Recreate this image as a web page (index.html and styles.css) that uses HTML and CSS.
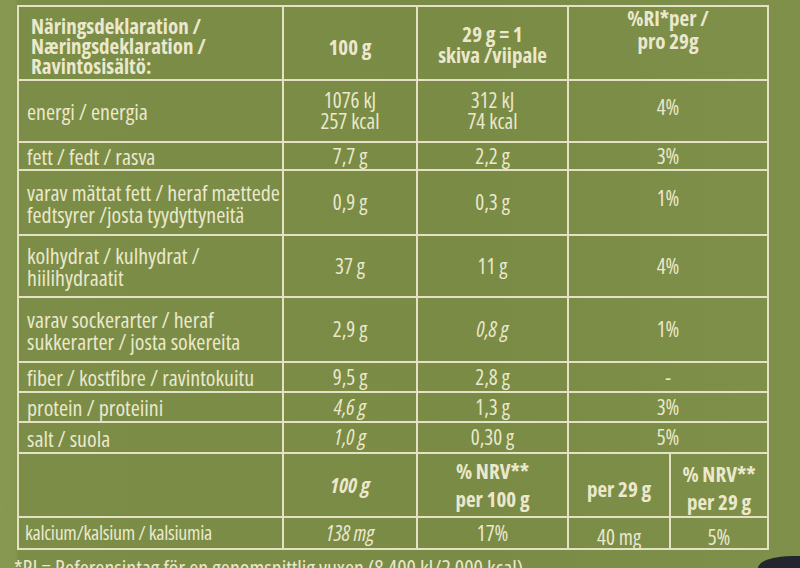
FILE: index.html
```html
<!DOCTYPE html>
<html lang="sv">
<head>
<meta charset="utf-8">
<title>Näringsdeklaration</title>
<link rel="stylesheet" href="styles.css">
</head>
<body>
<div class="sheet">
  <table class="nutri">
    <colgroup>
      <col class="c-name"><col class="c-100"><col class="c-29"><col class="c-a"><col class="c-b">
    </colgroup>
    <tr class="r-head">
      <th class="name head">Näringsdeklaration /<br>Næringsdeklaration /<br>Ravintosisältö:</th>
      <th class="low">100 g</th>
      <th class="pair">29 g = 1<br>skiva /viipale</th>
      <th class="ri" colspan="2">%RI*per /<br>pro 29g</th>
    </tr>
    <tr class="r-energy">
      <td class="name">energi / energia</td>
      <td class="num">1076 kJ<br>257 kcal</td>
      <td class="num">312 kJ<br>74 kcal</td>
      <td colspan="2" class="num up">4%</td>
    </tr>
    <tr class="r-one">
      <td class="name">fett / fedt / rasva</td>
      <td class="num">7,7 g</td>
      <td class="num">2,2 g</td>
      <td colspan="2" class="num">3%</td>
    </tr>
    <tr class="r-two">
      <td class="name">varav mättat fett / heraf mættede<br>fedtsyrer /josta tyydyttyneitä</td>
      <td class="num">0,9 g</td>
      <td class="num">0,3 g</td>
      <td colspan="2" class="num up">1%</td>
    </tr>
    <tr class="r-carb">
      <td class="name">kolhydrat / kulhydrat /<br>hiilihydraatit</td>
      <td class="num">37 g</td>
      <td class="num">11 g</td>
      <td colspan="2" class="num">4%</td>
    </tr>
    <tr class="r-two">
      <td class="name">varav sockerarter / heraf<br>sukkerarter / josta sokereita</td>
      <td class="num">2,9 g</td>
      <td class="num it">0,8 g</td>
      <td colspan="2" class="num">1%</td>
    </tr>
    <tr class="r-one r-fib">
      <td class="name">fiber / kostfibre / ravintokuitu</td>
      <td class="num">9,5 g</td>
      <td class="num">2,8 g</td>
      <td colspan="2" class="num">-</td>
    </tr>
    <tr class="r-one r-pro">
      <td class="name">protein / proteiini</td>
      <td class="num it">4,6 g</td>
      <td class="num">1,3 g</td>
      <td colspan="2" class="num">3%</td>
    </tr>
    <tr class="r-one r-salt">
      <td class="name">salt / suola</td>
      <td class="num it">1,0 g</td>
      <td class="num">0,30 g</td>
      <td colspan="2" class="num">5%</td>
    </tr>
    <tr class="r-bhead">
      <th class="name"></th>
      <th class="it">100 g</th>
      <th class="nrv wide">% NRV**<br>per 100 g</th>
      <th class="wide low">per 29 g</th>
      <th class="nrv wide low2">% NRV**<br>per 29 g</th>
    </tr>
    <tr class="r-one r-cal">
      <td class="name small">kalcium/kalsium / kalsiumia</td>
      <td class="num it">138 mg</td>
      <td class="num">17%</td>
      <td class="num low">40 mg</td>
      <td class="num low">5%</td>
    </tr>
  </table>
  <p class="foot">*RI = Referensintag för en genomsnittlig vuxen (8 400 kJ/2 000 kcal)</p>
</div>
<div class="corner"></div>
</body>
</html>
```

FILE: styles.css
```css
* { box-sizing: border-box; }

html, body {
  margin: 0;
  padding: 0;
}

body {
  width: 800px;
  height: 568px;
  overflow: hidden;
  position: relative;
  background:
    linear-gradient(90deg, #889a52 0, #86984f 15px, #7b8d46 19px, #798b44 60%, #7e9049 100%);
  font-family: "Open Sans", "Liberation Sans", sans-serif;
  font-stretch: 75%;
  color: #ebe8cd;
}

.sheet {
  padding: 5px 0 0 17px;
}

.nutri {
  border-collapse: collapse;
  table-layout: fixed;
  width: 750px;
}

.c-name { width: 265px; }
.c-100 { width: 134px; }
.c-29 { width: 151px; }
.c-a { width: 102px; }
.c-b { width: 98px; }

.nutri th,
.nutri td {
  border: 2px solid #e4e1c4;
  padding: 0 6px;
  font-size: 20px;
  line-height: 21px;
  font-weight: normal;
  text-align: center;
  vertical-align: middle;
  white-space: nowrap;
}

.nutri th {
  font-weight: bold;
  font-size: 21px;
}

.nutri .name {
  text-align: left;
  font-size: 22px;
  line-height: 22px;
  padding-left: 8px;
}

.nutri .num {
  font-size: 21px;
  font-stretch: 87.5%;
}

.nutri .small {
  font-size: 20px;
  letter-spacing: -0.3px;
  padding-left: 6px;
}

.nutri .head {
  font-size: 21px;
  line-height: 20px;
  vertical-align: top;
  padding-top: 9px;
  padding-left: 12px;
}

.nutri .pair {
  padding-top: 4px;
}

.nutri .ri {
  vertical-align: top;
  padding-top: 0;
  line-height: 23px;
}

.nutri .wide { font-stretch: 87.5%; }
.nutri .nrv { line-height: 28px; }
.nutri .low { padding-top: 8px; }
.nutri .low2 { padding-top: 6px; }
.nutri .up { padding-bottom: 8px; }
.nutri .it { font-style: italic; }

.r-head { height: 74px; }
.r-energy { height: 62px; }
.r-one { height: 28px; }
.r-two { height: 65px; }
.r-carb { height: 62px; }
.r-fib { height: 30px; }
.r-pro { height: 30px; }
.r-salt { height: 31px; }
.r-bhead { height: 64px; }
.r-cal { height: 32px; }

.foot {
  margin: 6px 0 0 -3px;
  font-size: 22px;
  line-height: 22px;
  white-space: nowrap;
}

.corner {
  position: absolute;
  right: 0;
  bottom: 0;
  width: 42px;
  height: 12px;
  background: #24262f;
  border-top-left-radius: 34px 12px;
}
```
